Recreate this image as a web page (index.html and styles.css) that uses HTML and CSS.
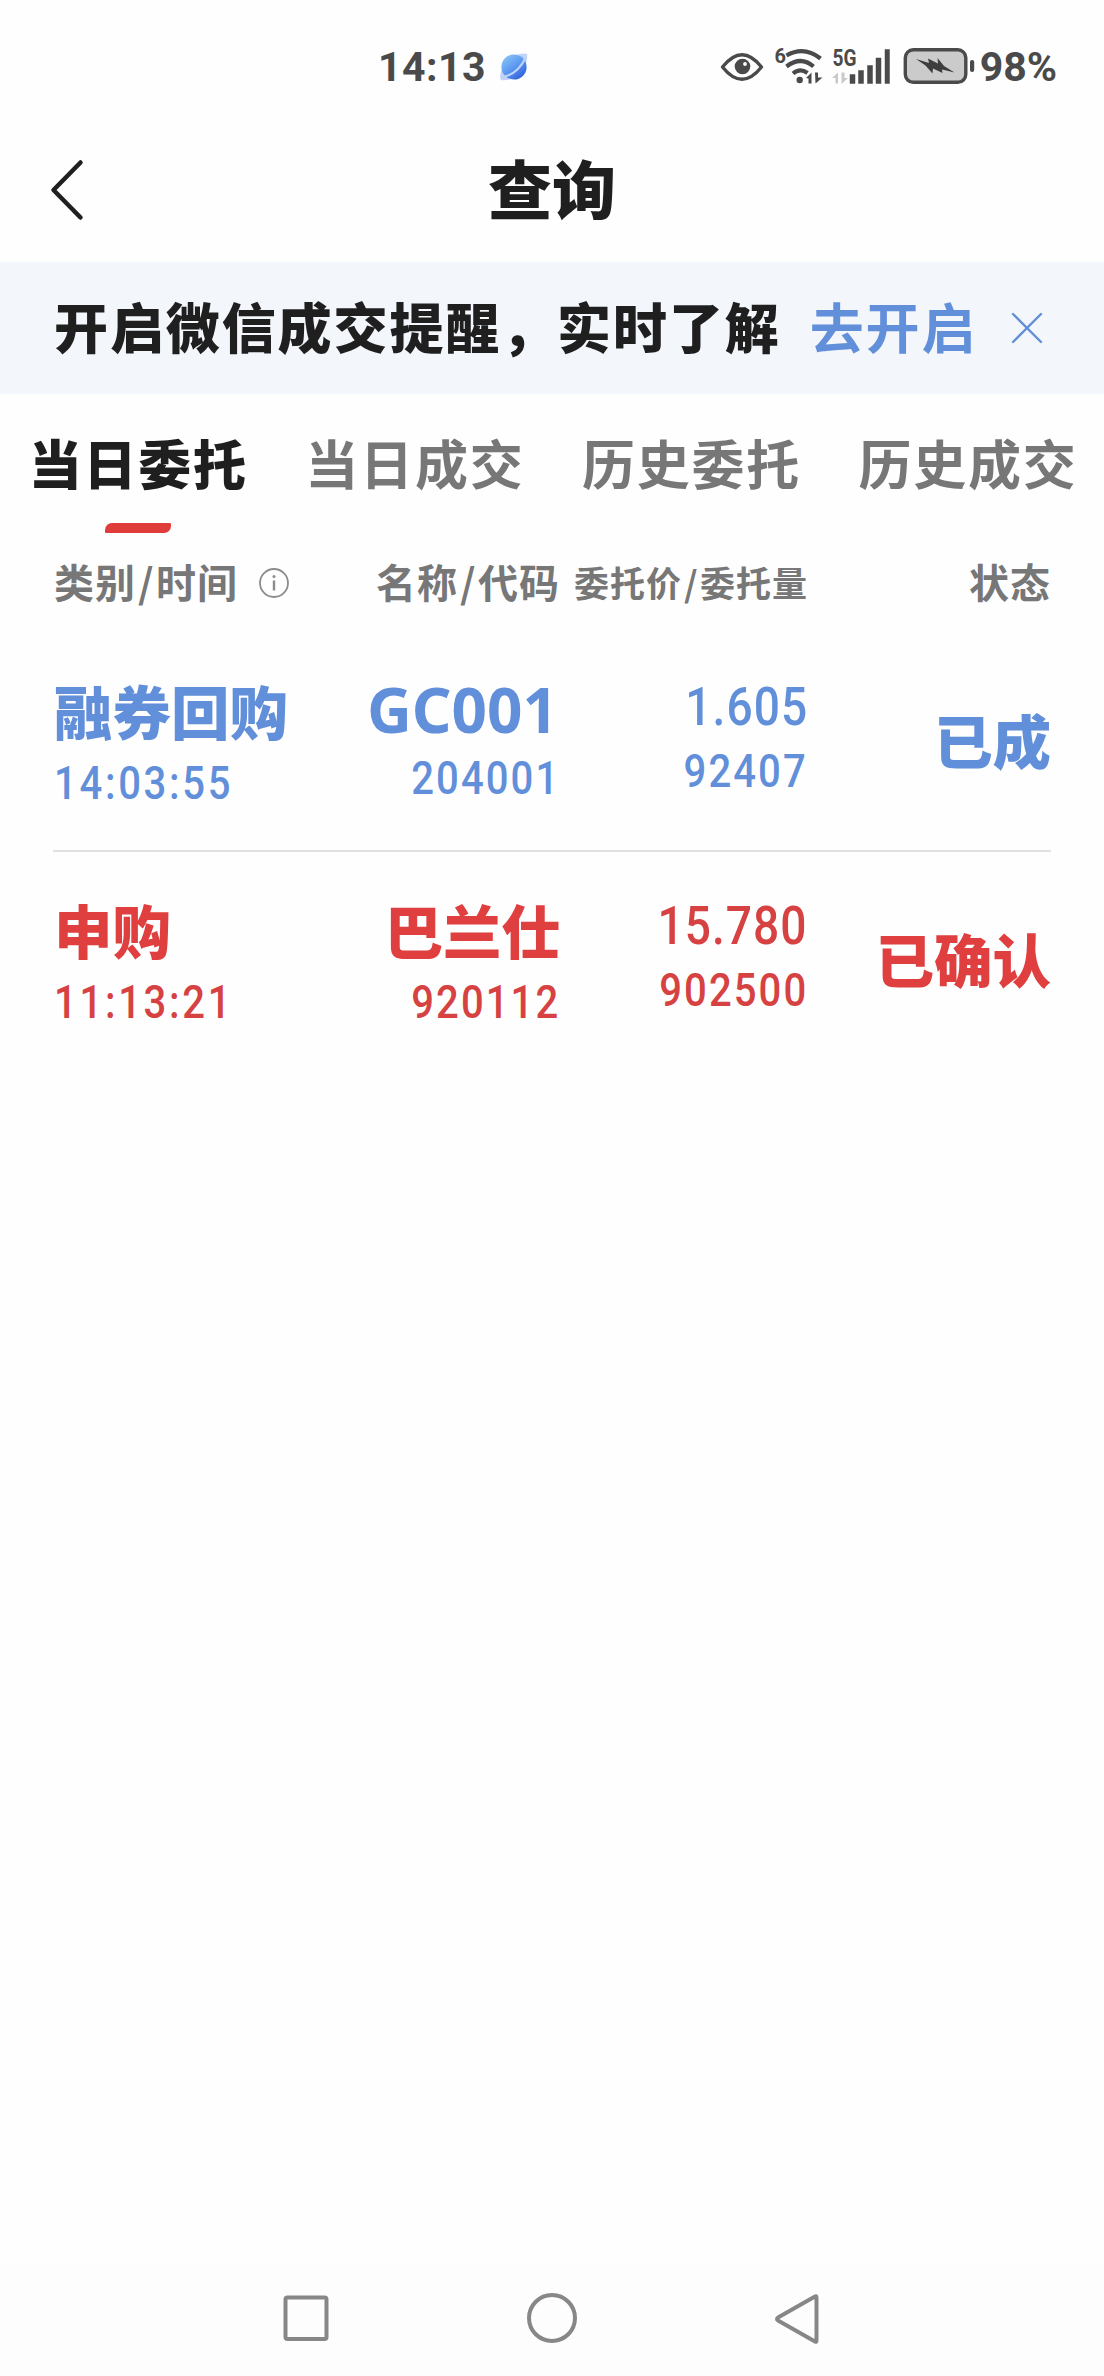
FILE: index.html
```html
<!DOCTYPE html>
<html lang="zh-CN">
<head>
<meta charset="utf-8">
<title>查询</title>
<link rel="stylesheet" href="styles.css">
</head>
<body>
<div class="status">
  <div class="status-left">
    <span class="clock">14:13</span>
    <svg class="planet" width="28" height="28" viewBox="0 0 28 28">
      <defs><linearGradient id="pg" x1="0.2" y1="0.1" x2="0.8" y2="0.9"><stop offset="0" stop-color="#83bdf6"/><stop offset="0.5" stop-color="#5c98f0"/><stop offset="1" stop-color="#3463dc"/></linearGradient></defs>
      <path d="M17 1.500Q25 0 27 1Q28 4 26 10ZM1.500 17Q-1 24 1 27Q5 28 11 26Z" fill="#c3d2f8"/>
      <circle cx="14" cy="14" r="12.6" fill="url(#pg)"/>
      <path d="M2 24Q17 22 25.500 5" fill="none" stroke="#b9d3fa" stroke-width="2.200"/>
    </svg>
  </div>
  <div class="status-right">
    <svg class="signals" width="256" height="50" viewBox="720 36 256 50">
      <path d="M722.5 67Q742 42.500 761.500 67Q742 91.500 722.500 67Z" fill="none" stroke="#4a4a4a" stroke-width="3.4" stroke-linejoin="round"/>
      <circle cx="742.500" cy="66.500" r="7.800" fill="#4a4a4a"/><circle cx="745" cy="64" r="1.900" fill="#fff"/>
      <text x="774.500" y="62.500" class="tiny">6</text>
      <g fill="none" stroke="#4a4a4a" stroke-width="4.2">
        <path d="M786.500 55.500Q804 45.500 820.500 58.500"/>
        <path d="M786.500 66.500Q801 55.500 813.500 66.500"/>
        <path d="M793 73.500Q800 67.500 807.500 73"/>
      </g>
      <circle cx="799.700" cy="80" r="3.200" fill="#4a4a4a"/>
      <path d="M806 78L811.500 72.500V83.500H808.500V78.500ZM815 72.500H818V77.500H822.500L815.500 83.500Z" fill="#4a4a4a"/>
      <text x="832.500" y="65.700" class="fiveg" textLength="24" lengthAdjust="spacingAndGlyphs">5G</text>
      <path d="M832 78L838 72.500V83.500H835.500V78ZM841.500 72.500H844.500V78H848L841.500 84Z" fill="#c9c9c9"/>
      <path d="M850 74.500h5v9h-5zM858.500 70.500h5v13h-5zM867.500 65.500h5v18h-5zM876 58h5v25.500h-5zM885 49.500h4.500v34h-4.500z" fill="#4a4a4a" stroke="#4a4a4a" stroke-width="0.500" stroke-linejoin="round"/>
      <rect x="905.300" y="49.800" width="60.500" height="32.500" rx="8" fill="#cbcbcb" stroke="#4a4a4a" stroke-width="3.400"/>
      <path d="M916 59L929 63L928 58.500L938 63.500L937.500 58L944 66L954.500 72.500L942 69.500L942.500 73L933 68.500L932.500 73.500L925.500 65.500Z" fill="#3e3e3e"/>
      <rect x="970" y="60" width="4.200" height="12" rx="2" fill="#4a4a4a"/>
    </svg>
    <span class="clock percent">98%</span>
  </div>
</div>
<header class="header">
  <svg class="back" width="36" height="64" viewBox="0 0 36 64"><path d="M31.500 4.500L4.500 32L31.500 59.500" fill="none" stroke="#1f1f1f" stroke-width="4.500" stroke-linecap="round" stroke-linejoin="round"/></svg>
  <h1 class="title">查询</h1>
</header>
<div class="banner">
  <span class="banner-text">开启微信成交提醒，实时了解</span>
  <a class="banner-link">去开启</a>
  <svg class="close" width="32" height="32" viewBox="0 0 32 32"><path d="M2 2L30 30M30 2L2 30" fill="none" stroke="#628fd6" stroke-width="2.400" stroke-linecap="round"/></svg>
</div>
<nav class="tabs">
  <span class="tab active">当日委托</span>
  <span class="tab">当日成交</span>
  <span class="tab">历史委托</span>
  <span class="tab">历史成交</span>
</nav>
<div class="grid head">
  <div class="kind"><span>类别<span class="slash">/</span>时间</span><svg class="info" width="32" height="32" viewBox="0 0 32 32"><circle cx="16" cy="16" r="14" fill="none" stroke="#8c8c8c" stroke-width="1.800"/><path d="M16 13.500V23.500" stroke="#8c8c8c" stroke-width="2.400"/><circle cx="16" cy="9.500" r="1.500" fill="#8c8c8c"/></svg></div>
  <div class="end">名称<span class="slash">/</span>代码</div>
  <div class="end small">委托价<span class="slash">/</span>委托量</div>
  <div class="end">状态</div>
</div>
<main>
  <section class="grid row blue">
    <div class="cell">
      <div class="name">融券回购</div>
      <div class="num left">14:03:55</div>
    </div>
    <div class="cell end latin">
      <div class="name">GC001</div>
      <div class="num">204001</div>
    </div>
    <div class="cell end amounts">
      <div class="num price">1.605</div>
      <div class="num">92407</div>
    </div>
    <div class="cell end state"><div class="name">已成</div></div>
  </section>
  <section class="grid row red">
    <div class="cell">
      <div class="name">申购</div>
      <div class="num left">11:13:21</div>
    </div>
    <div class="cell end">
      <div class="name">巴兰仕</div>
      <div class="num">920112</div>
    </div>
    <div class="cell end amounts">
      <div class="num price">15.780</div>
      <div class="num">902500</div>
    </div>
    <div class="cell end state"><div class="name">已确认</div></div>
  </section>
</main>
<footer class="keys">
  <svg width="48" height="52" viewBox="0 0 48 52"><rect x="3.500" y="5.500" width="41" height="41.500" rx="2" fill="none" stroke="#878787" stroke-width="4"/></svg>
  <svg width="52" height="52" viewBox="0 0 52 52"><circle cx="26" cy="26" r="23" fill="none" stroke="#878787" stroke-width="4"/></svg>
  <svg width="48" height="52" viewBox="0 0 48 52"><path d="M41 4.500Q42.500 3.500 42.500 5.500V48.500Q42.500 50.500 41 49.500L4 28.500Q2 27 4 25.500Z" fill="none" stroke="#878787" stroke-width="4" stroke-linejoin="round"/></svg>
</footer>
</body>
</html>
```
FILE: styles.css
```css
* { box-sizing: border-box; }
body {
  margin: 0;
  min-height: 2376px;
  display: flex;
  flex-direction: column;
  background: #fefefe;
  color: #1f1f1f;
  font-family: "Noto Sans CJK SC", sans-serif;
}
svg { display: block; flex: none; }

.status {
  height: 134px;
  padding: 0 48px 0 378px;
  display: flex;
  justify-content: space-between;
}
.status-left, .status-right { display: flex; }
.clock {
  margin-top: 42px;
  font: 700 41px/50px Roboto, sans-serif;
  letter-spacing: 0.5px;
  color: #4a4a4a;
}
.planet { margin: 53px 0 0 14px; }
.signals { margin-top: 36px; }
.percent { margin-left: 4px; letter-spacing: 0; margin-right: -1px; }
.tiny { font: 700 20px Roboto, sans-serif; fill: #4a4a4a; }
.fiveg { font: 700 23px Roboto, sans-serif; fill: #4a4a4a; }

.header {
  height: 128px;
  padding: 0 49px;
  display: grid;
  grid-template-columns: 36px 1fr 36px;
}
.back { margin-top: 24px; }
.title {
  margin: 0;
  text-align: center;
  font-size: 64px;
  line-height: 104px;
  font-weight: 900;
}

.banner {
  height: 132px;
  padding: 0 46px 0 54px;
  display: flex;
  align-items: center;
  background: #f3f6fb;
  font-size: 54px;
  font-weight: 900;
  letter-spacing: 1.9px;
  line-height: 128px;
  white-space: nowrap;
}
.banner-text, .banner-link { height: 132px; }
.banner-link { margin-left: 29px; color: #628fd9; font-weight: 700; }
.close { margin-left: auto; margin-right: 15px; }

.tabs {
  height: 150px;
  display: grid;
  grid-template-columns: repeat(4, 276.6px);
}
.tab {
  display: flex;
  flex-direction: column;
  align-items: center;
  padding-top: 20px;
  color: #777;
  font-size: 53px;
  font-weight: 700;
  letter-spacing: 1.8px;
  line-height: 96px;
}
.active { color: #1f1f1f; font-weight: 900; }
.active::after {
  content: "";
  width: 66px;
  height: 10px;
  margin-top: 13px;
  background: #e13c3c;
  border-radius: 7px 1px 7px 1px;
}

.grid {
  display: grid;
  grid-template-columns: 257px 250px 246px 245px;
  margin: 0 53px;
}
.end { text-align: right; }
.head {
  height: 89px;
  padding-top: 7px;
  color: #777;
  font-size: 40px;
  font-weight: 700;
  letter-spacing: 1px;
  line-height: 60px;
  white-space: nowrap;
}
.slash { margin: 0 1.5px 0 2px; }
.kind { display: flex; padding-left: 1px; }
.info { margin: 16px 0 0 20px; }
.small { font-size: 35px; margin-right: -2px; line-height: 61px; }

.row { height: 219px; }
.row:first-child { border-bottom: 2px solid #e0e0e0; }
.blue { color: #628fd9; }
.red { color: #e03f3f; }
.red .num { color: #d64242; }
.cell {
  display: flex;
  flex-direction: column;
  align-items: flex-start;
  gap: 8px;
  padding-top: 42px;
  padding-left: 1px;
}
.cell.end { align-items: flex-end; padding-left: 0; }
.name {
  font-size: 58.5px;
  font-weight: 900;
  line-height: 70px;
  white-space: nowrap;
}
.num {
  font: 500 46px/60px Roboto, sans-serif;
  letter-spacing: 2.4px;
  transform: scaleX(0.87);
  transform-origin: right;
}
.left { transform-origin: left; letter-spacing: 3.1px; }
.latin { gap: 6px; padding-top: 43px; }
.latin .name { font: 700 62px/66px "Noto Sans", sans-serif; padding-right: 2px; }
.amounts { gap: 4px; padding-top: 44px; margin-right: -2px; }
.price { font-size: 53px; letter-spacing: 1.2px; }
.state.cell { padding-top: 71px; }

.keys {
  height: 112px;
  margin-top: auto;
  padding: 28px 282px 0;
  display: flex;
  justify-content: space-between;
  background: #fdfdfd;
}
```
